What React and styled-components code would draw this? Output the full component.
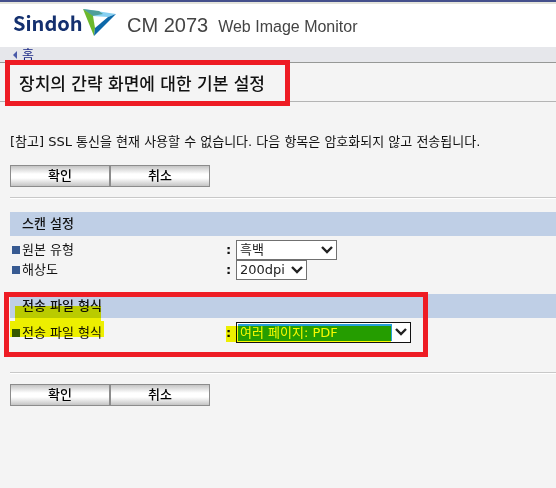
import React, { useState } from "react";
import styled, { createGlobalStyle } from "styled-components";

const GlobalStyle = createGlobalStyle`
  *,
  *::before,
  *::after {
    box-sizing: border-box;
  }
  body {
    margin: 0;
    background-color: #f4f4f4;
    color: #111;
    font-family: "DejaVu Sans", "Noto Sans CJK KR", sans-serif;
    font-size: 13px;
    line-height: 20px;
  }
`;

const Logo = () => (
  <LogoLink href="#home">
    <span>Sindoh</span>
    <svg width="34" height="28" viewBox="0 0 34 28" aria-hidden="true">
      <path d="M0 0L33 5L25 8L9 7Z" fill="#86d0f2" />
      <path d="M0 0L16 2L20 5L9 7Z" fill="#4f9f9a" />
      <path d="M0 0L10 7L12 19L11 27Z" fill="#6cb82c" />
      <path d="M33 5L11 27L12 19L25 8Z" fill="#0d68a8" />
    </svg>
  </LogoLink>
);

const Dropdown = ({ id, options, width, active }) => {
  const [value, setValue] = useState(options[0]);

  return (
    <SelectBox $width={width} $active={active}>
      <Select
        id={id}
        value={value}
        $active={active}
        onChange={(e) => setValue(e.target.value)}
      >
        {options.map((option) => (
          <option key={option}>{option}</option>
        ))}
      </Select>
      <Chevron width="12" height="8" viewBox="0 0 12 8" aria-hidden="true">
        <path d="M1 1L6 6L11 1" fill="none" stroke="#222" strokeWidth="2.4" />
      </Chevron>
      {active && <ValueMark />}
    </SelectBox>
  );
};

const Actions = () => (
  <ButtonRow>
    <Button type="button">확인</Button>
    <Button type="button">취소</Button>
  </ButtonRow>
);

const App = () => {
  return (
    <>
      <GlobalStyle />
      <Header>
        <Logo />
        <Model>CM 2073</Model>
        <Product>Web Image Monitor</Product>
      </Header>
      <Breadcrumb>
        <a href="#home">
          <svg width="4" height="8" viewBox="0 0 4 8" aria-hidden="true">
            <path d="M4 0V8L0 4Z" fill="#4a5aa8" />
          </svg>
          홈
        </a>
      </Breadcrumb>
      <TitleBar>
        <Title>장치의 간략 화면에 대한 기본 설정</Title>
      </TitleBar>
      <Content>
        <Note>
          [참고] SSL 통신을 현재 사용할 수 없습니다. 다음 항목은 암호화되지 않고
          전송됩니다.
        </Note>
        <Actions />
        <Divider />
        <Section>
          <SectionTitle>스캔 설정</SectionTitle>
          <Row>
            <Label htmlFor="original">원본 유형</Label>
            <Colon>:</Colon>
            <Dropdown id="original" width={101} options={["흑백", "컬러"]} />
          </Row>
          <Row>
            <Label htmlFor="resolution">해상도</Label>
            <Colon>:</Colon>
            <Dropdown
              id="resolution"
              width={71}
              options={["200dpi", "300dpi"]}
            />
          </Row>
        </Section>
        <Section>
          <SectionTitle>전송 파일 형식</SectionTitle>
          <Row>
            <Label htmlFor="format">전송 파일 형식</Label>
            <Colon>:</Colon>
            <Dropdown
              id="format"
              width={175}
              active
              options={["여러 페이지: PDF", "단일 페이지: TIFF"]}
            />
          </Row>
          <HeadingMark />
          <LabelMark />
          <SectionFrame />
        </Section>
        <Divider />
        <Actions />
      </Content>
    </>
  );
};

const Header = styled.header`
  display: flex;
  align-items: center;
  height: 47px;
  padding: 0 13px;
  border-top: 2px solid #45508c;
  background-color: #fff;
  box-shadow: inset 0 2px 0 #e4e4dc;
  color: #444;
  font-family: "Liberation Sans", Arial, sans-serif;
  white-space: nowrap;
`;

const LogoLink = styled.a`
  display: flex;
  align-items: center;
  width: 114px;
  margin-bottom: 4px;
  color: #14306f;
  font-family: "Noto Sans CJK KR", sans-serif;
  font-size: 20px;
  font-weight: bold;
  text-decoration: none;

  span {
    width: 70px;
  }
`;

const Model = styled.span`
  margin-right: 10px;
  font-size: 20px;
`;

const Product = styled.span`
  padding-top: 4px;
  font-size: 16px;
`;

const Breadcrumb = styled.nav`
  height: 16px;
  padding-left: 13px;
  border-bottom: 1px solid #969896;
  background-color: #e6e7eb;
  line-height: 16px;

  a {
    display: flex;
    align-items: center;
    gap: 5px;
    color: #1c2a86;
    text-decoration: none;
  }
`;

const TitleBar = styled.div`
  position: relative;
  height: 39px;
  padding-left: 19px;
  border-bottom: 1px solid #b4b4b4;
`;

const Title = styled.h1`
  margin: 0;
  font-size: 17px;
  font-weight: 500;
  line-height: 42px;
  white-space: nowrap;

  &::after {
    content: "";
    position: absolute;
    top: -3px;
    left: 5px;
    width: 285px;
    height: 46px;
    border: 5px solid #ee1c24;
  }
`;

const Content = styled.main`
  padding: 30px 0 0 10px;
`;

const Note = styled.p`
  margin: 0 0 13px;
  white-space: nowrap;
`;

const ButtonRow = styled.div`
  display: flex;
`;

const Button = styled.button`
  width: 100px;
  height: 22px;
  padding: 0;
  border: 1px solid #8c8c8c;
  background: linear-gradient(#c4c4c4, #fff 40%, #fff 60%, #c4c4c4);
  color: #000;
  font: inherit;
  font-weight: 500;
  line-height: 20px;
`;

const Divider = styled.hr`
  height: 2px;
  margin: 10px 0;
  border: 0;
  border-top: 1px solid #c8c8c8;
  background-color: #fff;
`;

const Section = styled.section`
  position: relative;
  margin-top: 13px;

  & + & {
    margin: 14px 0 29px;
  }
`;

const SectionTitle = styled.h2`
  margin: 0 0 4px;
  padding-left: 12px;
  background-color: #bfcfe6;
  font-size: 13px;
  font-weight: 500;
  line-height: 24px;
`;

const Row = styled.div`
  display: flex;
  align-items: center;
`;

const Label = styled.label`
  display: flex;
  align-items: center;
  gap: 2px;
  width: 216px;
  padding-left: 2px;

  &::before {
    content: "";
    width: 8px;
    height: 8px;
    background-color: #375a91;
  }
`;

const Colon = styled.span`
  width: 10px;
  font-weight: bold;
`;

const SelectBox = styled.div`
  position: relative;
  width: ${(props) => props.$width}px;
  height: ${(props) => (props.$active ? 21 : 20)}px;
  padding: 1px;
  border: 1px solid ${(props) => (props.$active ? "#111" : "#707070")};
  background-color: #fff;
`;

const Select = styled.select`
  display: block;
  appearance: none;
  width: 100%;
  height: 100%;
  padding: 0 2px;
  border: 0;
  outline: 0;
  background: ${(props) =>
    props.$active
      ? "linear-gradient(#26a0da, #26a0da) no-repeat 0 0 / calc(100% - 17px) 100%"
      : "transparent"};
  color: ${(props) => (props.$active ? "#fff" : "#222")};
  font: inherit;
  line-height: 16px;
`;

const Chevron = styled.svg`
  position: absolute;
  top: 5px;
  right: 3px;
  pointer-events: none;
`;

const Marker = styled.span`
  position: absolute;
  background-color: #f8fa00;
  mix-blend-mode: multiply;
  pointer-events: none;
`;

const ValueMark = styled(Marker)`
  top: 3px;
  right: 19px;
  bottom: 0;
  left: -11px;
`;

const HeadingMark = styled(Marker)`
  top: 12px;
  left: 5px;
  width: 86px;
  height: 15px;
`;

const LabelMark = styled(Marker)`
  top: 27px;
  left: 0;
  width: 94px;
  height: 16px;
`;

const SectionFrame = styled.div`
  position: absolute;
  top: -2px;
  left: -6px;
  width: 424px;
  height: 65px;
  border: 5px solid #ee1c24;
  pointer-events: none;
`;

export default App;
